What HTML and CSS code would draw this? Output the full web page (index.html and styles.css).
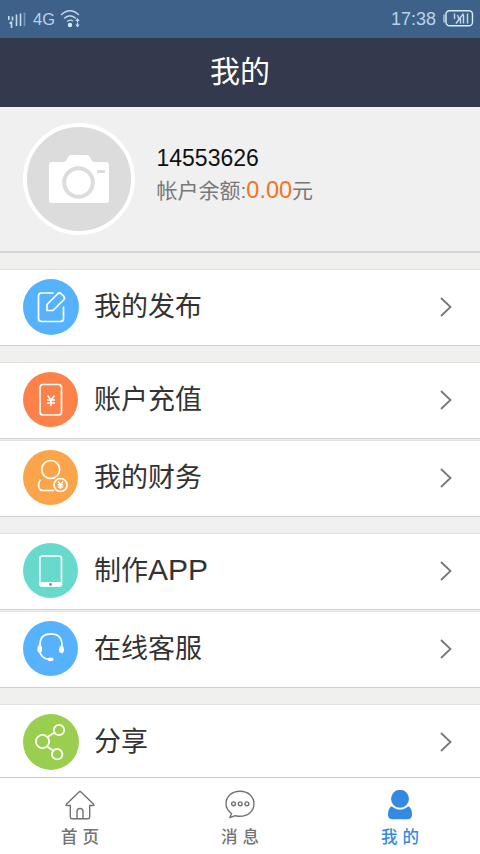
FILE: index.html
```html
<!DOCTYPE html>
<html lang="zh-CN">
<head>
<meta charset="utf-8">
<title>我的</title>
<link rel="stylesheet" href="styles.css">
</head>
<body>
<div class="status">
  <svg class="signal" width="20" height="18" viewBox="0 0 20 18"><path d="M1.800 5v4M4.500 10.500v6.500M2.600 12.500l1.900-1.500M5.500 5.500v4M9.500 3.500v11.500M13.500 2.500v12.500" fill="none" stroke="#c3dcf2" stroke-width="1.600"/><path d="M17.500 1.500v13.500" stroke="#7898b8" stroke-width="1.600"/></svg>
  <span class="net">4G</span>
  <svg class="wifi" width="22" height="20" viewBox="0 0 22 20"><g fill="none" stroke="#c3dcf2" stroke-width="1.300"><path d="M1 6Q10 -2.500 19 6M4 9.500Q10 4 16 9.500M7 12.500Q10 10 13 12"/></g><circle cx="10" cy="16" r="2.200" fill="#d8edff"/><path d="M17.500 9l2.200 3h-1.600v1.500h-1.200V12h-1.600zM17.500 18.500l2.200-3h-1.600V14h-1.200v1.500h-1.600z" fill="#c3dcf2"/></svg>
  <span class="time">17:38</span>
  <svg class="battery" width="32" height="18" viewBox="0 0 32 18"><path d="M1 5.500h2.500v8H1z" fill="#8fa9c0"/><rect x="4" y="1.700" width="26.500" height="15" rx="3.500" fill="none" stroke="#d5f0f5" stroke-width="1.400"/><path d="M12.500 4.500v5.500M15.500 6l1.500 4M21.500 4.500L14 14.500M18.500 10v4.500M21.500 6v8.500M25.500 4.500v10" fill="none" stroke="#c3dcf2" stroke-width="1.400"/></svg>
</div>
<header class="header">我的</header>
<main class="content">
  <section class="profile">
    <div class="avatar">
      <svg width="60" height="48" viewBox="0 0 60 48"><path d="M3 7H14Q17 7 18 4L19 2Q20 0 22 0H38Q40 0 41 2L42 4Q43 7 46 7H57Q60 7 60 10V45Q60 48 57 48H3Q0 48 0 45V10Q0 7 3 7Z" fill="#fff"/><circle cx="29.500" cy="27.500" r="14.300" fill="#fff" stroke="#dcdcdc" stroke-width="4"/><path d="M48 15h8v3h-8z" fill="#dcdcdc"/></svg>
    </div>
    <div class="info">
      <div class="uid">14553626</div>
      <div class="balance">帐户余额:<span class="amount">0.00</span>元</div>
    </div>
  </section>
  <div class="group">
    <div class="row">
      <svg class="icon" viewBox="0 0 56 56"><circle cx="28" cy="28" r="28" fill="#56b2fc"/><g fill="none" stroke="#fff" stroke-width="1.700" stroke-linecap="round" stroke-linejoin="round"><path d="M30 14H18.500Q15.500 14 15.500 17V39.500Q15.500 42.500 18.500 42.500H37.500Q40.500 42.500 40.500 39.500V28"/><path d="M24 31.500V25.500L34.500 15Q36.500 13 38.500 15L40.500 17Q42.500 19 40.500 21L30 31.500Z"/></g></svg>
      <span class="label">我的发布</span><svg class="arrow" viewBox="0 0 12 20"><path d="M1 1l9.500 9L1 19"/></svg>
    </div>
  </div>
  <div class="group">
    <div class="row">
      <svg class="icon" viewBox="0 0 56 56"><circle cx="27.500" cy="27.500" r="27.500" fill="#fc8249"/><rect x="17" y="12.500" width="21.500" height="30.500" rx="3" fill="none" stroke="#fff" stroke-width="1.700"/><path d="M24.500 23.500l3.500 4.500 3.500-4.500M24 28h8M24 31h8M28 28v6" fill="none" stroke="#fff" stroke-width="1.700"/></svg>
      <span class="label">账户充值</span><svg class="arrow" viewBox="0 0 12 20"><path d="M1 1l9.500 9L1 19"/></svg>
    </div>
    <div class="row">
      <svg class="icon" viewBox="0 0 56 56"><circle cx="27.500" cy="27.500" r="27.500" fill="#fca449"/><g fill="none" stroke="#fff" stroke-width="1.700"><circle cx="27.700" cy="19.500" r="9"/><path d="M17.500 29.500Q15.500 31.500 15.500 36Q16 40.500 20 40.500H31"/><circle cx="37.500" cy="35" r="6.500"/><path d="M35 31.500l2.500 3.200 2.500-3.200M34.800 34.700h5.400M34.800 37h5.400M37.500 34.500v4.500" stroke-width="1.400"/></g></svg>
      <span class="label">我的财务</span><svg class="arrow" viewBox="0 0 12 20"><path d="M1 1l9.500 9L1 19"/></svg>
    </div>
  </div>
  <div class="group">
    <div class="row">
      <svg class="icon" viewBox="0 0 56 56"><circle cx="27.500" cy="27.500" r="27.500" fill="#67d9cd"/><rect x="16.800" y="13" width="21.700" height="30" rx="2.500" fill="none" stroke="#fff" stroke-width="1.700"/><path d="M16.500 39h22v2.500q0 2-2 2h-18q-2 0-2-2z" fill="#fff"/><circle cx="27.500" cy="41.400" r="1.300" fill="#3b97bd"/></svg>
      <span class="label">制作<span class="latin">APP</span></span><svg class="arrow" viewBox="0 0 12 20"><path d="M1 1l9.500 9L1 19"/></svg>
    </div>
    <div class="row">
      <svg class="icon" viewBox="0 0 56 56"><circle cx="27.500" cy="27.500" r="27.500" fill="#56b2fc"/><path d="M17 25Q16.500 12.800 27.800 12.800T39 25M16.500 29Q17.500 37.500 26 38.500" fill="none" stroke="#fff" stroke-width="1.700"/><ellipse cx="16.700" cy="28" rx="2.400" ry="3.800" fill="#fff"/><ellipse cx="38.500" cy="28.500" rx="2.400" ry="3.800" fill="#fff"/><ellipse cx="27.500" cy="38.300" rx="3" ry="1.900" fill="#fff"/></svg>
      <span class="label">在线客服</span><svg class="arrow" viewBox="0 0 12 20"><path d="M1 1l9.500 9L1 19"/></svg>
    </div>
  </div>
  <div class="group">
    <div class="row">
      <svg class="icon" viewBox="0 0 56 56"><circle cx="28" cy="28" r="28" fill="#99ce4f"/><g fill="none" stroke="#fff" stroke-width="1.800"><circle cx="19.500" cy="27.500" r="6.600"/><circle cx="36" cy="16" r="5.200"/><circle cx="34.200" cy="40.200" r="5.200"/><path d="M24.500 23l7.200-4.500M24 32.500l6.500 4.200"/></g></svg>
      <span class="label">分享</span><svg class="arrow" viewBox="0 0 12 20"><path d="M1 1l9.500 9L1 19"/></svg>
    </div>
  </div>
</main>
<nav class="tabs">
  <div class="tab">
    <svg width="32" height="30" viewBox="0 0 32 30"><g fill="none" stroke="#737373" stroke-width="1.400" stroke-linejoin="round"><path d="M6.300 15.500H3.200Q1.200 15.500 2.800 13.800L14.800 2.200Q16 1 17.200 2.200L29.200 13.800Q30.800 15.500 28.800 15.500H25.700V27Q25.700 28.800 24 28.800H8Q6.300 28.800 6.300 27Z"/><path d="M13 28.800V21.500Q13 18.500 16 18.500T19 21.500V28.800"/></g></svg>
    <span>首页</span>
  </div>
  <div class="tab">
    <svg width="32" height="30" viewBox="0 0 32 30"><g fill="none" stroke="#737373" stroke-width="1.400" stroke-linejoin="round"><path d="M7.500 23.500L5.800 27.500L11.500 25.700Q14 26.300 16 26.300C24 26.300 30 21 30 13.800S24 1.200 16 1.200S2 6.500 2 13.800Q2 19.500 7.500 23.500Z"/><circle cx="9.500" cy="13.800" r="1.900"/><circle cx="16.200" cy="13.800" r="1.900"/><circle cx="22.900" cy="13.800" r="1.900"/></g></svg>
    <span>消息</span>
  </div>
  <div class="tab active">
    <svg width="32" height="30" viewBox="0 0 32 30"><path d="M7 16.500H25Q28 19 28 24.500Q28 29.200 23.500 29.200H8.500Q4 29.200 4 24.500Q4 19 7 16.500Z" fill="#348ae2"/><circle cx="16" cy="8.800" r="9.900" fill="#348ae2" stroke="#fff" stroke-width="1.800"/></svg>
    <span>我的</span>
  </div>
</nav>
</body>
</html>
```
FILE: styles.css
```css
* { box-sizing: border-box; }
body {
  margin: 0;
  width: 480px;
  height: 854px;
  overflow: hidden;
  display: flex;
  flex-direction: column;
  background: #f0f0ee;
  font-family: "Liberation Sans", "Noto Sans CJK SC", sans-serif;
}
svg { display: block; flex: none; }
.status {
  height: 38px;
  flex: none;
  display: flex;
  align-items: center;
  padding: 0 6px 0 7px;
  background: #3e6189;
  color: #b9d3ea;
}
.signal { margin-top: 2px; }
.net { margin-left: 6px; width: 27px; font-size: 16.500px; }
.wifi { margin-left: 0; }
.time { margin-left: auto; font-size: 18px; }
.battery { margin-left: 6px; margin-top: -2px; }
.header {
  height: 69px;
  flex: none;
  background: #333a4e;
  color: #fff;
  font-size: 30px;
  line-height: 67px;
  text-align: center;
}
.content { flex: 1; min-height: 0; overflow: hidden; }
.profile {
  height: 146px;
  display: flex;
  padding: 16px 23px 0;
  background: #f0f0f0;
  border-bottom: 2px solid #d5d5d3;
}
.avatar {
  width: 112px;
  height: 112px;
  display: flex;
  align-items: center;
  justify-content: center;
  border: 4px solid #fff;
  border-radius: 50%;
  background: #dcdcdc;
}
.info { margin-left: 21.500px; padding-top: 19px; white-space: nowrap; }
.uid { font-size: 23px; line-height: 32px; color: #111; }
.balance { font-size: 21px; line-height: 32px; color: #777; }
.amount { font-size: 23.500px; color: #f57322; }
.group { margin-top: 16px; display: grid; gap: 1px; }
.row {
  height: 77px;
  display: flex;
  align-items: center;
  padding: 0 28px 2px 23px;
  background: #fff;
  border-top: 1px solid #e2e2e2;
  border-bottom: 1px solid #cfd1d2;
}
.icon { width: 56px; height: 56px; }
.label {
  margin-left: 15px;
  flex: 1;
  font-size: 27px;
  line-height: 40px;
  color: #333;
}
.latin { font-size: 30px; line-height: 1; }
.arrow { width: 12px; height: 20px; fill: none; stroke: #777; stroke-width: 1.800; }
.tabs {
  height: 77px;
  flex: none;
  display: grid;
  grid-template-columns: repeat(3, 1fr);
  background: #fff;
  border-top: 1px solid #c8c8c8;
}
.tab {
  display: flex;
  flex-direction: column;
  align-items: center;
  padding-top: 12px;
  color: #737373;
  font-size: 16.500px;
  font-weight: 500;
  line-height: 24px;
}
.tab span { margin-top: 5px; letter-spacing: 5px; padding-left: 5px; }
.active { color: #348ae2; }
```
